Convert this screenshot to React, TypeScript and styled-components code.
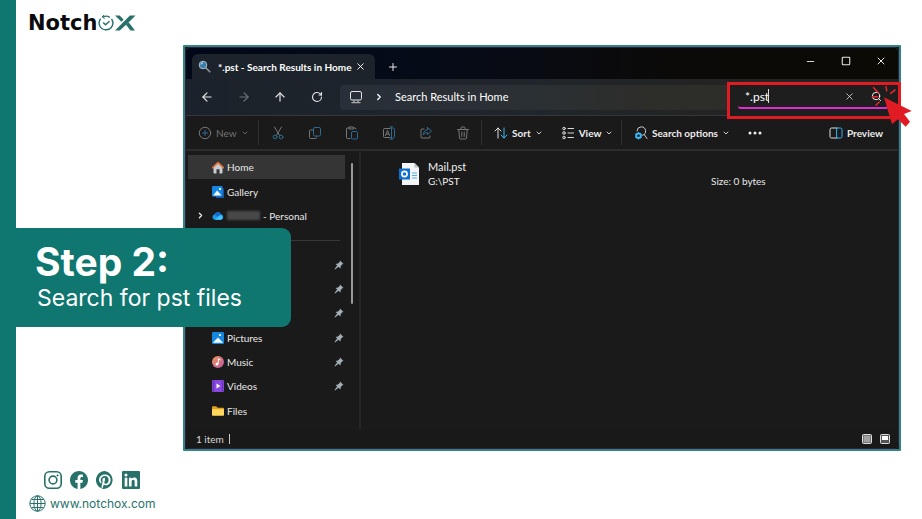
import React from "react";
import styled, { createGlobalStyle } from "styled-components";
import { ArrowLeft, ArrowRight, ArrowUp, RotateCw, X, Plus, Minus, Square, ChevronDown, ChevronRight, Search } from "lucide-react";

const TEAL = "#0f7670";
const UI = 'Lato, "Noto Sans", sans-serif';

const GlobalStyle = createGlobalStyle`
  * { box-sizing: border-box; }
  body { margin: 0; background: #fff; }
  button, input { font: inherit; color: inherit; background: none; border: 0; padding: 0; margin: 0; outline: none; }
  svg { display: block; flex: none; }
`;

const Page = styled.div`
  display: grid;
  grid-template-columns: 16px minmax(0, 1fr);
  min-height: 100vh;
  background: #fff;
`;
const SideBand = styled.div`background: ${TEAL};`;
const Main = styled.main`display: flex; flex-direction: column;`;
const Header = styled.header`
  height: 45px;
  padding: 0 12px;
  display: flex;
  align-items: center;
`;
const Brand = styled.a`
  display: flex;
  align-items: center;
  gap: 1px;
  color: #0b0b0b;
  text-decoration: none;
  font: 700 21px/24px "DejaVu Sans", sans-serif;
`;
const Stage = styled.section`
  position: relative;
  padding: 0 21px 0 167px;
`;
const Banner = styled.div`
  position: absolute;
  left: 0;
  top: 183px;
  width: 275px;
  height: 99px;
  padding: 12px 19px;
  border-radius: 0 9px 9px 0;
  background: ${TEAL};
  color: #fff;
  font-family: Inter, sans-serif;
`;
const StepTitle = styled.h1`
  margin: 0;
  font-size: 39px;
  line-height: 44px;
  font-weight: 700;
`;
const StepText = styled.p`
  margin: 0;
  padding-left: 2px;
  font-size: 23px;
  line-height: 28px;
  white-space: nowrap;
`;

const Window = styled.div`
  border: 2px solid #2f8580;
  border-radius: 1px;
  background: #1a1a1a;
  color: #e8e8e8;
  font-family: ${UI};
  font-size: 10px;
  line-height: 14px;
`;
const Surface = styled.div`
  padding-top: 1px;
  border: 1px solid #3b1a40;
  border-radius: 5px;
  background: linear-gradient(90deg, #030819, #060b18 35%, #0c0a08 70%, #0c0a05);
`;
const TitleBar = styled.div`
  display: flex;
  align-items: flex-end;
  height: 30px;
  padding-left: 6px;
`;
const Tab = styled.div`
  display: flex;
  align-items: center;
  width: 183px;
  height: 25px;
  padding: 0 9px 0 6px;
  border-radius: 6px 6px 0 0;
  background: #1d232b;
  color: #fff;
  font-weight: 700;
`;
const TabTitle = styled.span`
  flex: 1;
  min-width: 0;
  margin-left: 7px;
  white-space: nowrap;
`;
const IconButton = styled.button<{ $w: number; $dim?: boolean }>`
  display: flex;
  align-items: center;
  justify-content: center;
  flex: none;
  width: ${(p) => p.$w}px;
  height: 24px;
  opacity: ${(p) => (p.$dim ? 0.4 : 1)};
`;
const Captions = styled.div`
  display: flex;
  align-self: flex-start;
  margin-left: auto;
`;
const NavBar = styled.div`
  display: flex;
  align-items: center;
  height: 37px;
  padding-left: 2px;
  background: linear-gradient(90deg, #1b222b, #20262b 50%, #232321 80%);
  border-bottom: 1px solid #35363a;
`;
const Address = styled.div`
  display: flex;
  align-items: center;
  flex: 1;
  height: 25px;
  margin-left: 5px;
  padding-left: 9px;
  gap: 11px;
  border-radius: 4px 0 0 4px;
  background: linear-gradient(90deg, #292f38, #2b3034 50%, #2d2d2a 80%);
  color: #fff;
  font-size: 11px;
`;
const SearchFrame = styled.div`
  position: relative;
  align-self: flex-start;
  flex: none;
  width: 174px;
  height: 37px;
  margin: 3px -3px -4px 0;
  padding: 0 9px 0 8px;
  border: 3px solid #e01b24;
  background: #1e1e1e;
`;
const SearchField = styled.label`
  display: flex;
  align-items: center;
  height: 24px;
  padding-left: 7px;
  border-bottom: 2px solid #df2ed0;
  border-radius: 3px;
  background: #1e1e1e;
  color: #fff;
  font-size: 12px;
  input { width: 28px; height: 18px; }
`;
const Caret = styled.span`width: 1px; height: 14px; background: #ddd; margin-left: -5px;`;
const ClickPointer = styled.svg`
  position: absolute;
  left: 139px;
  top: -3px;
`;
const ToolBar = styled.div`
  display: flex;
  align-items: center;
  height: 35px;
  padding-right: 15px;
  background: #1a1a1a;
  border-bottom: 2px solid #2c2c2c;
`;
const ToolGroup = styled.div<{ $width?: number; $gap?: number }>`
  display: flex;
  align-items: center;
  flex: none;
  gap: ${(p) => p.$gap ?? 23}px;
  width: ${(p) => (p.$width ? p.$width + "px" : "auto")};
  height: 25px;
  padding-left: 12px;
  border-right: 1px solid ${(p) => (p.$width ? "#2f2f2f" : "transparent")};
`;
const Tool = styled.button<{ $dim?: boolean }>`
  display: flex;
  align-items: center;
  gap: 4px;
  color: ${(p) => (p.$dim ? "#747474" : "#ededed")};
  font-weight: ${(p) => (p.$dim ? 400 : 700)};
  white-space: nowrap;
`;
const Spacer = styled.span`flex: 1;`;

const Body = styled.div`display: flex; background: #1a1a1a;`;
const Sidebar = styled.nav`
  position: relative;
  width: 175px;
  flex: none;
  padding: 4px 14px 6px 2px;
  border-right: 2px solid #252525;
`;
const NavList = styled.ul`
  display: flex;
  flex-direction: column;
  height: 268px;
  margin: 0;
  padding: 0;
  list-style: none;
`;
const NavItem = styled.li<{ $active?: boolean }>`
  display: flex;
  align-items: center;
  flex: 1;
  padding: 0 1px 0 8px;
  background: ${(p) => (p.$active ? "#353535" : "transparent")};
`;
const NavLink = styled.a`
  display: flex;
  align-items: center;
  flex: 1;
  gap: 3px;
  color: inherit;
  text-decoration: none;
  white-space: nowrap;
`;
const Expander = styled.button`width: 16px; height: 14px; display: flex; align-items: center;`;
const Redacted = styled.span`width: 33px; height: 9px; background: #484848; filter: blur(1px);`;
const Rule = styled.span`flex: 1; height: 1px; background: #373737; margin: 0 4px 0 0;`;
const ScrollThumb = styled.span`
  position: absolute;
  right: 6px;
  top: 12px;
  width: 2px;
  height: 141px;
  border-radius: 1px;
  background: #9a9a9a;
`;
const Files = styled.div`flex: 1; padding: 8px 30px 0 38px;`;
const FileRow = styled.div`
  display: flex;
  align-items: center;
  gap: 8px;
`;
const FileName = styled.div`
  display: flex;
  flex-direction: column;
  color: #f0f0f0;
  strong { font-weight: 400; font-size: 11px; line-height: 14px; }
  span { font-size: 10px; line-height: 14px; }
`;
const FileSize = styled.span`width: 157px; margin: 15px 0 0 auto;`;
const StatusBar = styled.div`
  display: flex;
  align-items: center;
  height: 19px;
  padding: 0 8px 0 10px;
  gap: 8px;
  color: #d8d8d8;
  background: #191919;
  border-radius: 0 0 5px 5px;
`;
const StatusDivider = styled.span`width: 1px; height: 10px; margin-left: -3px; background: #c8c8c8;`;

const Footer = styled.footer`
  display: flex;
  flex-direction: column;
  gap: 6px;
  padding: 20px 13px 0;
  color: #28716b;
`;
const Socials = styled.div`
  display: flex;
  align-items: center;
  gap: 8px;
  padding-left: 15px;
  a { display: block; color: inherit; }
`;
const Site = styled.a`
  display: flex;
  align-items: center;
  gap: 4px;
  color: inherit;
  text-decoration: none;
  font: 400 12px/17px Inter, sans-serif;
`;

const LogoMark = () => (
  <svg width="38" height="18" viewBox="0 0 38 18" fill="none" stroke="#28716b">
    <path d="M2.6 4.8A6.7 6.7 0 0 0 8 15.7 6.7 6.7 0 0 0 13.5 5M4.8 3A6.7 6.7 0 0 1 11.8 3.4" strokeWidth="1.4" />
    <path d="M5.2 8.5l2.3 2.3 4-3.6" strokeWidth="1.5" />
    <path d="M6 .9L4.2 3.2 6.8 4.4" strokeWidth="1" />
    <path d="M17 1.500h4.600l4 4-2.200 2.200zM37.500 1.500h-5.600L17 16.500h4.800L30 9zM28 10.700l2.600-2.400L37 16.500h-4.500z" fill="#28716b" stroke="none" />
  </svg>
);

const S = ({ size = 14, children }: { size?: number; children: React.ReactNode }) => (
  <svg width={size} height={size} viewBox="0 0 14 14" fill="none" stroke="#777" strokeWidth="1" strokeLinecap="round" strokeLinejoin="round">{children}</svg>
);
const BLUE = "#2c6b91";
const Chev = () => <ChevronDown size={8} strokeWidth={2.5} />;
const Monitor = () => (
  <S><rect x="1.5" y="1.5" width="11" height="8.5" rx="1.5" stroke="#e4e4e4" /><path d="M3 12.7h8M5 10.5v2M9 10.5v2" stroke="#a9a9a9" strokeWidth="1.3" /></S>
);
const Pin = () => (
  <svg width="10" height="10" viewBox="0 0 10 10"><path d="M6 .5l3.5 3.4-1.2.4-1.5 1.8-.4 2.3-1.9-1.7L1 9.4l-.5-.5 2.7-3.3L1.6 4l2.3-.5L5.7 2z" fill="#a4afb8" /></svg>
);
const HomeIcon = () => (
  <svg width="12" height="13" viewBox="0 0 12 13"><path d="M1.5 5.5L6 1.8l4.5 3.7v6.2a.8.8 0 0 1-.8.8H7.5V8.3h-3v4.2H2.3a.8.8 0 0 1-.8-.8z" fill="#c6ccd2" /><path d="M.7 6.6L6 1.6l5.3 5" fill="none" stroke="#e8713a" strokeWidth="1.6" strokeLinecap="round" strokeLinejoin="round" /></svg>
);
const PictureIcon = ({ stacked }: { stacked?: boolean }) => (
  <svg width="12" height="12" viewBox="0 0 12 12">
    {stacked && <path d="M3 2h7.5A1.5 1.5 0 0 1 12 3.500V12H4z" fill="#1756a5" />}
    <rect width={stacked ? 10.5 : 12} height={stacked ? 10.5 : 12} rx="1.2" fill="#1687df" />
    <path d={stacked ? "M1 9.500l4.200-5 4.300 5z" : "M.8 10.700l5.200-5.300 5.200 5.300z"} fill="#f4faff" /><circle cx="8" cy="3" r="1.1" fill="#fff" />
  </svg>
);
const CloudIcon = () => (
  <svg width="12" height="10" viewBox="0 0 13 10"><path d="M3 9a2.8 2.8 0 0 1-.4-5.5A4 4 0 0 1 9.900 3 3.100 3.100 0 0 1 10 9z" fill="#159be9" /><path d="M3 9l6.500-5a3 3 0 0 1 .5 5z" fill="#48c5ff" /><path d="M2.600 3.500A4 4 0 0 1 9.900 3L5.800 5.600z" fill="#1768cf" /></svg>
);
const MusicIcon = () => (
  <svg width="12" height="12" viewBox="0 0 12 12"><defs><linearGradient id="music" x2="1" y2="1"><stop stopColor="#f19a5c" /><stop offset="1" stopColor="#ba55a0" /></linearGradient></defs><circle cx="6" cy="6" r="6" fill="url(#music)" /><path d="M6.300 7.700V2.800L8.600 4" stroke="#fff" fill="none" /><circle cx="5" cy="7.900" r="1.500" fill="#fff" /></svg>
);
const VideoIcon = () => (
  <svg width="12" height="12" viewBox="0 0 12 12"><rect width="12" height="12" rx="1" fill="#8848e0" /><path d="M1.500 1v10M10.500 1v10" stroke="#4b2095" strokeWidth="1.200" strokeDasharray="1.200 1" /><path d="M4.500 3.500v5L8.500 6z" fill="#fff" /></svg>
);
const FolderIcon = () => (
  <svg width="12" height="10" viewBox="0 0 12 10"><path d="M0 1.200A1 1 0 0 1 1 .2h3.200l1.500 1.500H11a1 1 0 0 1 1 1V9H0z" fill="#e3a01e" /><path d="M0 3.200h12V9a.8.8 0 0 1-.8.8H.8A.8.8 0 0 1 0 9z" fill="#ffd75c" /></svg>
);
const MailFile = () => (
  <svg width="21" height="24" viewBox="0 0 21 24">
    <path d="M3 1h12.500L20 5.500V23H3z" fill="#f3f5f7" /><path d="M15.500 1v4.500H20z" fill="#b9c0c6" />
    <path d="M13 11h5M13 13.500h5M13 16h5" stroke="#5aa9e6" />
    <rect y="6.500" width="11" height="11" fill="#0f6fd0" /><circle cx="5.500" cy="12" r="2.600" fill="none" stroke="#fff" strokeWidth="1.600" />
  </svg>
);

type PlaceInfo = { label: string; icon: React.ReactNode; active?: boolean; pinned?: boolean };

const places: PlaceInfo[] = [
  { label: "Pictures", icon: <PictureIcon />, pinned: true },
  { label: "Music", icon: <MusicIcon />, pinned: true },
  { label: "Videos", icon: <VideoIcon />, pinned: true },
  { label: "Files", icon: <FolderIcon /> },
];

const Place = ({ label, icon, active, pinned }: PlaceInfo) => (
  <NavItem $active={active}>
    <Expander as="span" />
    <NavLink href="#">{icon}<span>{label}</span></NavLink>
    {pinned && <Pin />}
  </NavItem>
);

export default function App() {
  return (
    <Page>
      <GlobalStyle />
      <SideBand />
      <Main>
        <Header><Brand href="#" aria-label="Notchox"><span>Notch</span><LogoMark /></Brand></Header>
        <Stage>
          <Window>
            <Surface>
              <TitleBar>
                <Tab>
                  <svg width="13" height="13" viewBox="0 0 13 13"><path d="M7.500 7.500l4.300 4.300" stroke="#8d979e" strokeWidth="1.600" strokeLinecap="round" /><circle cx="5" cy="5" r="3.800" fill="#3a7cab" stroke="#a9bfcd" /><path d="M3 4.500a2 2 0 0 1 2-1.700" stroke="#d8efff" fill="none" /></svg>
                  <TabTitle>*.pst - Search Results in Home</TabTitle>
                  <button aria-label="Close tab"><X size={11} strokeWidth={2} /></button>
                </Tab>
                <IconButton $w={36} aria-label="New tab"><Plus size={12} strokeWidth={2} /></IconButton>
                <Captions>
                  <IconButton $w={36} aria-label="Minimize"><Minus size={11} strokeWidth={2} /></IconButton>
                  <IconButton $w={36} aria-label="Maximize"><Square size={10} strokeWidth={2.500} /></IconButton>
                  <IconButton $w={34} aria-label="Close"><X size={12} strokeWidth={2} /></IconButton>
                </Captions>
              </TitleBar>
              <NavBar>
                <IconButton $w={38} aria-label="Back"><ArrowLeft size={14} /></IconButton>
                <IconButton $w={36} $dim aria-label="Forward"><ArrowRight size={14} /></IconButton>
                <IconButton $w={36} aria-label="Up"><ArrowUp size={14} /></IconButton>
                <IconButton $w={37} aria-label="Refresh"><RotateCw size={12} strokeWidth={2.200} /></IconButton>
                <Address><Monitor /><ChevronRight size={10} strokeWidth={3} /><span>Search Results in Home</span></Address>
                <SearchFrame>
                  <SearchField>
                    <input aria-label="Search" defaultValue="*.pst" />
                    <Caret />
                    <Spacer />
                    <IconButton $w={27} aria-label="Clear"><X size={11} strokeWidth={1.500} /></IconButton>
                    <IconButton $w={26} aria-label="Run search"><Search size={11} strokeWidth={2} /></IconButton>
                  </SearchField>
                  <ClickPointer width="46" height="48" viewBox="0 0 46 48">
                    <path d="M15 15.300L42.700 29 35 32l6 7.700-4.300 5-7.700-7.400-6 5z" fill="#e01b24" />
                    <path d="M9.500 10.700L4.500 5.700M17.700 8.700L17 4.700M21.700 11.300L26 8M8.700 14.700H3.300M10.300 20L7 23" stroke="#e8262e" strokeWidth="1.600" strokeLinecap="round" />
                  </ClickPointer>
                </SearchFrame>
              </NavBar>
              <ToolBar>
                <ToolGroup $width={73}>
                  <Tool $dim><S><circle cx="7" cy="7" r="5.700" /><path d="M7 4.500v5M4.500 7h5" stroke={BLUE} /></S><span>New</span><Chev /></Tool>
                </ToolGroup>
                <ToolGroup $width={223}>
                  <Tool aria-label="Cut"><S><path d="M3.500 1l5 8.300M10.500 1l-5 8.300" /><circle cx="4" cy="11" r="1.900" stroke={BLUE} /><circle cx="10" cy="11" r="1.900" stroke={BLUE} /></S></Tool>
                  <Tool aria-label="Copy"><S><path d="M4.500 4H2.500A1 1 0 0 0 1.500 5v6.500a1 1 0 0 0 1 1h5a1 1 0 0 0 1-1V11" /><rect x="5.500" y="1.500" width="7" height="8.500" rx="1.300" stroke={BLUE} /></S></Tool>
                  <Tool aria-label="Paste"><S><path d="M5 12.500H2.500a1 1 0 0 1-1-1V3a1 1 0 0 1 1-1H4M8.500 2H10a1 1 0 0 1 1 1M4.300 1h4v2h-4z" /><rect x="6.500" y="5.500" width="6" height="7.500" rx="1" stroke={BLUE} /></S></Tool>
                  <Tool aria-label="Rename"><S><path d="M8 2.500H2.500a1 1 0 0 0-1 1v7a1 1 0 0 0 1 1H8M3.500 9.500L5.500 4.500l2 5M4.300 8h2.500" /><path d="M9.500 1v12M8 1h3M8 13h3M11 2.500h.5a1 1 0 0 1 1 1v7a1 1 0 0 1-1 1H11" stroke={BLUE} /></S></Tool>
                  <Tool aria-label="Share"><S><path d="M5 3H3a1 1 0 0 0-1 1v7a1 1 0 0 0 1 1h7a1 1 0 0 0 1-1v-1" /><path d="M8.500 1.500l4 3.500-4 3.500V6.500C6.500 6.500 5 7.500 4.500 9c0-3.500 1.500-5 4-5.300z" stroke={BLUE} /></S></Tool>
                  <Tool aria-label="Delete"><S><path d="M1.500 3.500h11M5 3.500V2a1 1 0 0 1 1-1h2a1 1 0 0 1 1 1v1.500M2.800 3.500l.7 8.500a1 1 0 0 0 1 1h5a1 1 0 0 0 1-1l.7-8.500M5.800 6v4.500M8.200 6v4.500" /></S></Tool>
                </ToolGroup>
                <ToolGroup $width={140} $gap={18}>
                  <Tool><S><path d="M4 12V2M1 5l3-3 3 3" stroke="#ddd" /><path d="M10 2v10M7 9l3 3 3-3" stroke="#38b7f5" /></S><span>Sort</span><Chev /></Tool>
                  <Tool><S><circle cx="3" cy="2.500" r="1.300" stroke="#ddd" /><circle cx="3" cy="7" r="1.300" stroke="#ddd" /><circle cx="3" cy="11.500" r="1.300" stroke="#ddd" /><path d="M7 2.500h5.500M7 7h5.500M7 11.500h5.500" stroke="#ddd" /></S><span>View</span><Chev /></Tool>
                </ToolGroup>
                <ToolGroup $gap={18}>
                  <Tool><S><path d="M3 5a4.300 4.300 0 1 1 5.500 4.300M10.200 8.500l2.800 4" stroke="#ccc" /><circle cx="4.500" cy="9.800" r="2.300" stroke="#39b9f5" strokeWidth="2" /><path d="M4.500 6.500v6.600M1.700 8.200l5.600 3.200M1.700 11.400l5.600-3.200" stroke="#39b9f5" strokeDasharray="1 4.600" /></S><span>Search options</span><Chev /></Tool>
                  <Tool aria-label="More"><svg width="14" height="14" viewBox="0 0 14 14" fill="#eee"><circle cx="2" cy="7" r="1.500" /><circle cx="7" cy="7" r="1.500" /><circle cx="12" cy="7" r="1.500" /></svg></Tool>
                </ToolGroup>
                <Spacer />
                <Tool><S><path d="M8 2H2.500a1.500 1.500 0 0 0-1.500 1.500v7A1.500 1.500 0 0 0 2.500 12H8" stroke="#ddd" /><path d="M8 2h3.500A1.500 1.500 0 0 1 13 3.500v7a1.500 1.500 0 0 1-1.500 1.500H8z" stroke="#39b1ed" /></S><span>Preview</span></Tool>
              </ToolBar>
              <Body>
                <Sidebar>
                  <NavList>
                    <Place label="Home" icon={<HomeIcon />} active />
                    <Place label="Gallery" icon={<PictureIcon stacked />} />
                    <NavItem>
                      <Expander aria-label="Expand"><ChevronRight size={9} strokeWidth={3.500} /></Expander>
                      <NavLink href="#"><CloudIcon /><Redacted /><span>- Personal</span></NavLink>
                    </NavItem>
                    <NavItem><Rule /></NavItem>
                    {[0, 1, 2].map((n) => <NavItem key={n}><Spacer /><Pin /></NavItem>)}
                    {places.map((p) => <Place key={p.label} {...p} />)}
                  </NavList>
                  <ScrollThumb />
                </Sidebar>
                <Files>
                  <FileRow>
                    <MailFile />
                    <FileName><strong>Mail.pst</strong><span>G:\PST</span></FileName>
                    <FileSize>Size: 0 bytes</FileSize>
                  </FileRow>
                </Files>
              </Body>
              <StatusBar>
                <span>1 item</span><StatusDivider /><Spacer />
                <button aria-label="Details view"><svg width="10" height="10" viewBox="0 0 10 10"><rect x=".5" y=".5" width="9" height="9" rx="1" fill="#777" stroke="#ddd" /><path d="M2 3h6M2 5h6M2 7h6" stroke="#ccc" /></svg></button>
                <button aria-label="Large icons view"><svg width="10" height="10" viewBox="0 0 10 10"><rect x=".5" y=".5" width="9" height="9" rx="1" fill="#555" stroke="#ddd" /><path d="M2 2h6v4H2z" fill="#fff" /></svg></button>
              </StatusBar>
            </Surface>
          </Window>
          <Banner>
            <StepTitle>Step 2:</StepTitle>
            <StepText>Search for pst files</StepText>
          </Banner>
        </Stage>
        <Footer>
          <Socials>
            <a href="#" aria-label="Instagram"><svg width="18" height="18" viewBox="0 0 18 18" fill="none" stroke="currentColor" strokeWidth="1.600"><rect x=".8" y=".8" width="16.400" height="16.400" rx="4.500" /><circle cx="9" cy="9" r="3.900" /><circle cx="13.600" cy="4.400" r=".6" fill="currentColor" strokeWidth="1" /></svg></a>
            <a href="#" aria-label="Facebook"><svg width="18" height="18" viewBox="0 0 24 24" fill="currentColor"><path d="M24 12.070C24 5.400 18.600 0 12 0S0 5.400 0 12.070C0 18.100 4.400 23.100 10.100 24v-8.400H7.100v-3.500h3V9.400c0-3 1.800-4.700 4.500-4.700 1.300 0 2.700.2 2.700.2v3h-1.500c-1.500 0-2 .9-2 1.900v2.300h3.400l-.5 3.500h-2.900V24C19.600 23.100 24 18.100 24 12.070z" /></svg></a>
            <a href="#" aria-label="Pinterest"><svg width="18" height="18" viewBox="0 0 24 24" fill="currentColor"><path d="M12 0a12 12 0 0 0-4.400 23.200c-.1-1-.2-2.400 0-3.400l1.400-6s-.4-.7-.4-1.800c0-1.600 1-2.900 2.100-2.900 1 0 1.500.8 1.500 1.700 0 1-.7 2.600-1 4-.3 1.200.6 2.200 1.800 2.200 2.100 0 3.800-2.300 3.800-5.500 0-2.900-2.100-4.900-5-4.900-3.400 0-5.500 2.600-5.500 5.200 0 1 .4 2.100.9 2.700l.1.400-.4 1.400c-.1.200-.2.300-.4.200-1.500-.7-2.500-2.900-2.500-4.700 0-3.800 2.800-7.300 8-7.300 4.200 0 7.500 3 7.500 7 0 4.200-2.700 7.600-6.300 7.600-1.200 0-2.400-.6-2.800-1.400l-.8 2.900c-.3 1-1 2.400-1.500 3.200A12 12 0 1 0 12 0z" /></svg></a>
            <a href="#" aria-label="LinkedIn"><svg width="18" height="18" viewBox="0 0 24 24" fill="currentColor"><path d="M1.500 0h21A1.500 1.500 0 0 1 24 1.500v21a1.500 1.500 0 0 1-1.500 1.500h-21A1.500 1.500 0 0 1 0 22.500v-21A1.500 1.500 0 0 1 1.500 0zM3.600 9v11.500h3.500V9zM5.300 3.300a2 2 0 1 0 0 4.100 2 2 0 0 0 0-4.100zM9.300 9v11.500h3.500v-5.700c0-1.500.4-3 2.200-3s1.900 1.700 1.900 3.100v5.600h3.500v-6.300c0-3.100-.7-5.500-4.300-5.500-1.700 0-2.900 1-3.300 1.900V9z" fillRule="evenodd" /></svg></a>
          </Socials>
          <Site href="#"><svg width="17" height="17" viewBox="0 0 17 17" fill="none" stroke="currentColor"><circle cx="8.500" cy="8.500" r="7.700" /><ellipse cx="8.500" cy="8.500" rx="3.600" ry="7.700" /><path d="M8.500 1v15M1 8.500h15M2.500 4.500h12M2.500 12.500h12" /></svg>www.notchox.com</Site>
        </Footer>
      </Main>
    </Page>
  );
}
